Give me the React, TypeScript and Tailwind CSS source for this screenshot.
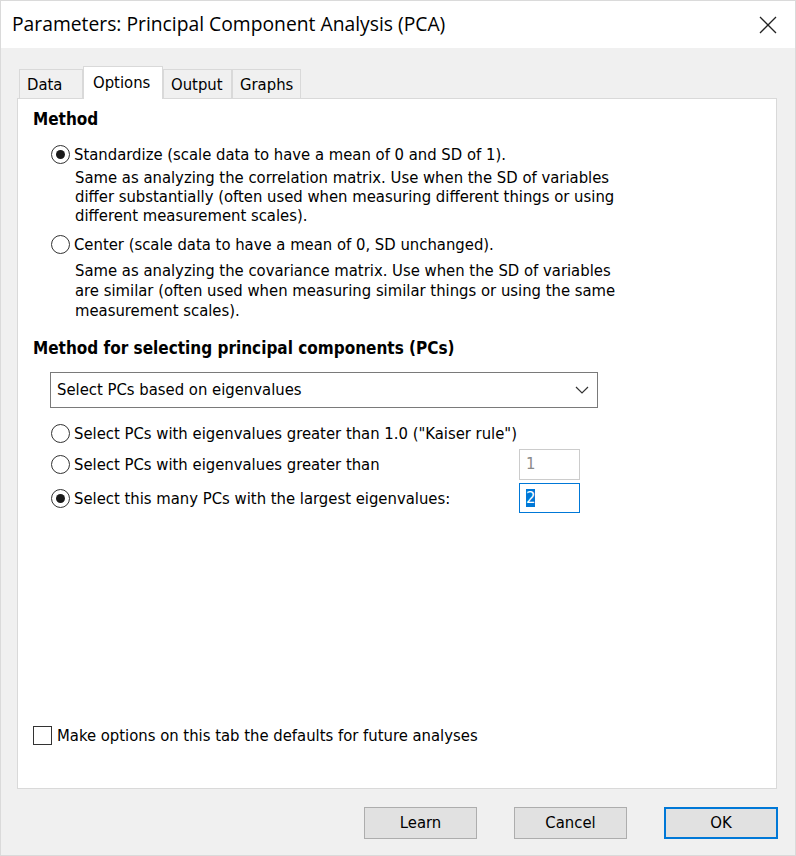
import React from 'react';

const body = { fontFamily: '"DejaVu Sans Condensed", "DejaVu Sans", sans-serif' };
const title = { fontFamily: '"Open Sans", "Noto Sans", sans-serif' };

function Radio({ checked }: { checked?: boolean }) {
  return (
    <span className="w-[19px] h-[19px] shrink-0 rounded-full border border-[#333] bg-white flex items-center justify-center">
      {checked && <span className="w-[9px] h-[9px] rounded-full bg-[#1a1a1a]" />}
    </span>
  );
}

const TABS = [
  { label: 'Data', w: 'w-[64px]' },
  { label: 'Options', w: 'w-[80px]', active: true },
  { label: 'Output', w: 'w-[69px]' },
  { label: 'Graphs', w: 'w-[69px]' },
];

export default function App() {
  return (
    <div className="w-[796px] h-[856px] bg-[#f0f0f0] border border-[#dadada] flex flex-col text-black" style={body}>
      {/* title bar */}
      <div className="h-[47px] bg-white flex items-center justify-between pl-[11px] pr-[18px]">
        <span className="text-[19.3px]" style={title}>Parameters: Principal Component Analysis (PCA)</span>
        <svg width="18" height="18" viewBox="0 0 18 18" className="text-[#222]">
          <path d="M1 1L17 17M17 1L1 17" stroke="currentColor" strokeWidth="1.3" />
        </svg>
      </div>

      {/* tabs */}
      <div className="flex items-end pl-[18px] pt-[18px] relative z-10 text-[16.5px]">
        {TABS.map(t =>
          t.active ? (
            <div key={t.label} className={`${t.w} h-[33px] -mb-px bg-white border border-[#d9d9d9] border-b-0 flex items-center pl-[9px]`}>
              {t.label}
            </div>
          ) : (
            <div key={t.label} className={`${t.w} h-[29px] bg-[#f0f0f0] border border-[#d9d9d9] border-b-0 flex items-center pl-[7px] pt-[2px]`}>
              {t.label}
            </div>
          )
        )}
      </div>

      {/* panel */}
      <div className="ml-[16px] w-[760px] h-[691px] bg-white border border-[#d9d9d9] flex flex-col pl-[15px] pt-[10px] text-[16.5px]">
        <div className="font-bold text-[17px] leading-[20px]">Method</div>

        <div className="mt-[16px] ml-[18px] flex items-center gap-[4px] leading-[19px]">
          <Radio checked />
          <span>Standardize (scale data to have a mean of 0 and SD of 1).</span>
        </div>
        <div className="ml-[42px] mt-[4px] leading-[19px]">
          Same as analyzing the correlation matrix. Use when the SD of variables<br />
          differ substantially (often used when measuring different things or using<br />
          different measurement scales).
        </div>

        <div className="mt-[10px] ml-[18px] flex items-center gap-[4px] leading-[19px]">
          <Radio />
          <span>Center (scale data to have a mean of 0, SD unchanged).</span>
        </div>
        <div className="ml-[42px] mt-[7px] leading-[20px]">
          Same as analyzing the covariance matrix. Use when the SD of variables<br />
          are similar (often used when measuring similar things or using the same<br />
          measurement scales).
        </div>

        <div className="font-bold text-[17px] leading-[20px] mt-[17px]">Method for selecting principal components (PCs)</div>

        <div className="mt-[14px] ml-[17px] w-[548px] h-[36px] border border-[#7a7a7a] bg-white flex items-center justify-between pl-[6px] pr-[8px]">
          <span>Select PCs based on eigenvalues</span>
          <svg width="14" height="8" viewBox="0 0 14 8">
            <path d="M1 1L7 7L13 1" fill="none" stroke="#333" strokeWidth="1.2" />
          </svg>
        </div>

        <div className="mt-[15px] ml-[18px] flex items-center gap-[4px] leading-[19px] h-[20px]">
          <Radio />
          <span>Select PCs with eigenvalues greater than 1.0 ("Kaiser rule")</span>
        </div>

        <div className="mt-[6px] ml-[18px] w-[529px] flex items-center justify-between">
          <div className="flex items-center gap-[4px] leading-[19px]">
            <Radio />
            <span>Select PCs with eigenvalues greater than</span>
          </div>
          <div className="w-[61px] h-[31px] border border-[#cccccc] bg-white flex items-center pl-[6px] text-[#8a8a8a]">1</div>
        </div>

        <div className="mt-[3px] ml-[18px] w-[529px] flex items-center justify-between">
          <div className="flex items-center gap-[4px] leading-[19px]">
            <Radio checked />
            <span>Select this many PCs with the largest eigenvalues:</span>
          </div>
          <div className="w-[61px] h-[30px] border border-[#0078d7] bg-white flex items-center pl-[6px]">
            <span className="bg-[#0078d7] text-white leading-[18px]">2</span>
          </div>
        </div>

        <div className="flex-1" />

        <div className="flex items-center gap-[5px] mb-[43px] leading-[19px]">
          <span className="w-[19px] h-[19px] border border-[#333] bg-white shrink-0" />
          <span>Make options on this tab the defaults for future analyses</span>
        </div>
      </div>

      {/* buttons */}
      <div className="flex justify-end gap-[37px] pr-[17px] pt-[18px] text-[16.5px]">
        <button className="w-[113px] h-[32px] bg-[#e1e1e1] border border-[#adadad]">Learn</button>
        <button className="w-[113px] h-[32px] bg-[#e1e1e1] border border-[#adadad]">Cancel</button>
        <button className="w-[114px] h-[32px] bg-[#e1e1e1] border-2 border-[#0078d7]">OK</button>
      </div>
    </div>
  );
}
